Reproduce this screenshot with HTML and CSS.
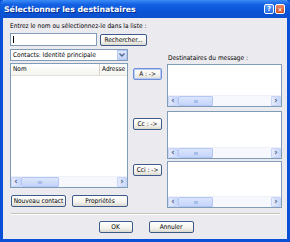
FILE: index.html
```html
<!DOCTYPE html>
<html lang="fr">
<head>
  <meta charset="UTF-8" />
  <title>Sélectionner les destinataires</title>
  <link rel="stylesheet" href="styles.css">
</head>
<body>
  <div class="window">
    <div class="titlebar">
      <span class="title">Sélectionner les destinataires</span>
      <span class="tb-btn help">?</span>
      <span class="tb-btn close">✕</span>
    </div>

    <div class="content">
      <div class="prompt">Entrez le nom ou sélectionnez-le dans la liste :</div>
      <div class="search">
        <div class="input"><span class="caret"></span></div>
        <button class="btn find">Rechercher...</button>
      </div>

      <div class="main">
        <div class="leftcol">
          <div class="combo">
            <span class="combo-text">Contacts: Identité principale</span>
            <span class="combo-arrow">
              <svg width="6" height="4" viewBox="0 0 6 4"><path d="M0.5 0.5 L3 3 L5.5 0.5" fill="none" stroke="#4d6185" stroke-width="1.3"/></svg>
            </span>
          </div>
          <div class="list contacts">
            <div class="header">
              <span class="col name">Nom</span>
              <span class="col addr">Adresse</span>
            </div>
            <div class="list-body"></div>
            <div class="hscroll">
              <span class="arrow">‹</span>
              <span class="thumb wide"><i></i></span>
              <span class="track"></span>
              <span class="arrow">›</span>
            </div>
          </div>
          <div class="actions">
            <button class="btn">Nouveau contact</button>
            <button class="btn props">Propriétés</button>
          </div>
        </div>

        <div class="midcol">
          <button class="btn move to">A : -&gt;</button>
          <button class="btn move cc">Cc : -&gt;</button>
          <button class="btn move bcc">Cci : -&gt;</button>
        </div>

        <div class="rightcol">
          <div class="label">Destinataires du message :</div>
          <div class="list dest one">
            <div class="list-body"></div>
            <div class="hscroll">
              <span class="arrow">‹</span>
              <span class="thumb"><i></i></span>
              <span class="track"></span>
              <span class="arrow">›</span>
            </div>
          </div>
          <div class="list dest two">
            <div class="list-body"></div>
            <div class="hscroll">
              <span class="arrow">‹</span>
              <span class="thumb"><i></i></span>
              <span class="track"></span>
              <span class="arrow">›</span>
            </div>
          </div>
          <div class="list dest three">
            <div class="list-body"></div>
            <div class="hscroll">
              <span class="arrow">‹</span>
              <span class="thumb"><i></i></span>
              <span class="track"></span>
              <span class="arrow">›</span>
            </div>
          </div>
        </div>
      </div>

      <div class="separator"></div>

      <div class="footer">
        <button class="btn ok">OK</button>
        <button class="btn cancel">Annuler</button>
      </div>
    </div>
  </div>
</body>
</html>
```

FILE: styles.css
```css
body {
  margin: 0;
  font-family: "DejaVu Sans Condensed", "Liberation Sans", sans-serif;
  font-size: 6.5px;
  color: #000;
}
.window {
  width: 290px;
  height: 242px;
  box-sizing: border-box;
  background: #ebeaee;
  border: 3px solid #0a4fd8;
  border-top: none;
  display: flex;
  flex-direction: column;
}
.titlebar {
  height: 18px;
  margin: 0 -3px;
  display: flex;
  align-items: center;
  padding: 0 5px 0 4px;
  background: linear-gradient(to bottom, #3b8cf7 0%, #1461e4 25%, #0a55d8 60%, #0b4fce 100%);
  border-radius: 5px 5px 0 0;
}
.title {
  flex: 1;
  color: #fff;
  font-family: "DejaVu Sans", sans-serif;
  font-weight: bold;
  font-size: 7.8px;
  text-shadow: 1px 1px 0 #0a2c8a;
}
.tb-btn {
  width: 10px;
  height: 10px;
  box-sizing: border-box;
  border: 1px solid #fff;
  border-radius: 2px;
  color: #fff;
  font-size: 7px;
  font-weight: bold;
  display: flex;
  align-items: center;
  justify-content: center;
  margin-left: 1px;
}
.help {
  background: linear-gradient(#5a9cf9, #2a6ee8);
}
.close {
  background: linear-gradient(#e88a6a, #d24e24);
  font-size: 6px;
}
.content {
  flex: 1;
  padding: 3px 5px 0 7px;
  display: flex;
  flex-direction: column;
}
.prompt {
  height: 9px;
  line-height: 9px;
  margin-top: 1px;
}
.search {
  display: flex;
  margin-top: 2px;
  height: 13px;
}
.input {
  width: 87px;
  box-sizing: border-box;
  background: #fff;
  border: 1px solid #7f9db9;
  padding: 2px;
}
.caret {
  display: block;
  width: 1px;
  height: 7px;
  background: #000;
}
.btn {
  font-family: inherit;
  font-size: 6.5px;
  color: #000;
  padding: 0;
  height: 12px;
  white-space: nowrap;
  box-sizing: border-box;
  border: 1px solid #3d5b8a;
  border-radius: 2px;
  background: linear-gradient(to bottom, #ffffff 0%, #f4f3ee 60%, #dcd9d0 100%);
  cursor: pointer;
}
.find {
  width: 47px;
  margin-left: 3px;
  margin-top: 1px;
}
.main {
  display: flex;
  margin-top: 3px;
}
.leftcol {
  width: 118px;
  display: flex;
  flex-direction: column;
}
.combo {
  height: 12px;
  box-sizing: border-box;
  border: 1px solid #7f9db9;
  background: #fff;
  display: flex;
  align-items: center;
}
.combo-text {
  flex: 1;
  padding-left: 2px;
}
.combo-arrow {
  width: 10px;
  height: 10px;
  box-sizing: border-box;
  border: 1px solid #b7c8f3;
  background: linear-gradient(#dfe8fd, #c3d3f9);
  display: flex;
  align-items: center;
  justify-content: center;
}
.list {
  box-sizing: border-box;
  border: 1px solid #7f9db9;
  background: #fff;
  display: flex;
  flex-direction: column;
}
.contacts {
  height: 125px;
  margin-top: 2px;
}
.header {
  height: 11px;
  display: flex;
  background: linear-gradient(#fff, #f5f4ef);
  border-bottom: 1px solid #e2e1da;
}
.col {
  line-height: 11px;
  padding-left: 2px;
}
.name {
  width: 86px;
  border-right: 1px solid #d6d3c8;
}
.list-body {
  flex: 1;
}
.hscroll {
  height: 10px;
  display: flex;
  background: #f6f8fd;
  border-top: 1px solid #eef1f8;
}
.arrow {
  width: 10px;
  box-sizing: border-box;
  border: 1px solid #c6d4f7;
  border-radius: 1px;
  background: linear-gradient(to right, #e4ebfd, #c9d7fa);
  color: #4d6185;
  font-size: 9px;
  font-weight: bold;
  line-height: 7px;
  text-align: center;
}
.thumb {
  width: 35px;
  box-sizing: border-box;
  border: 1px solid #b4c6f4;
  border-radius: 1px;
  background: linear-gradient(to bottom, #dbe5fd, #c4d4fa);
  display: flex;
  align-items: center;
  justify-content: center;
}
.thumb.wide {
  width: 38px;
}
.thumb i {
  display: block;
  width: 4px;
  height: 3px;
  background: #a9bdeb;
}
.track {
  flex: 1;
}
.actions {
  display: flex;
  margin-top: 7px;
  padding-left: 1px;
}
.actions .btn {
  width: 55px;
}
.actions .props {
  width: 56px;
  margin-left: 6px;
}
.midcol {
  width: 29px;
  margin-left: 5px;
  display: flex;
  flex-direction: column;
}
.move {
  width: 29px;
}
.to {
  margin-top: 19px;
  border-color: #6f8fd8;
  box-shadow: inset 0 0 0 1px #b6cbf5;
}
.cc {
  margin-top: 38px;
}
.bcc {
  margin-top: 34px;
}
.rightcol {
  width: 115px;
  margin-left: 5px;
  display: flex;
  flex-direction: column;
}
.label {
  height: 9px;
  line-height: 9px;
  margin-top: 5px;
  padding-left: 1px;
}
.dest.one {
  height: 43px;
  margin-top: 1px;
}
.dest.two {
  height: 48px;
  margin-top: 4px;
}
.dest.three {
  height: 47px;
  margin-top: 2px;
}
.separator {
  margin-top: 5px;
  margin-right: 2px;
  margin-left: 1px;
  height: 0;
  border-top: 1px solid #c5c2b8;
  border-bottom: 1px solid #fff;
}
.footer {
  display: flex;
  justify-content: center;
  gap: 16px;
  margin-top: 6px;
}
.ok {
  width: 34px;
}
.cancel {
  width: 45px;
}
```
